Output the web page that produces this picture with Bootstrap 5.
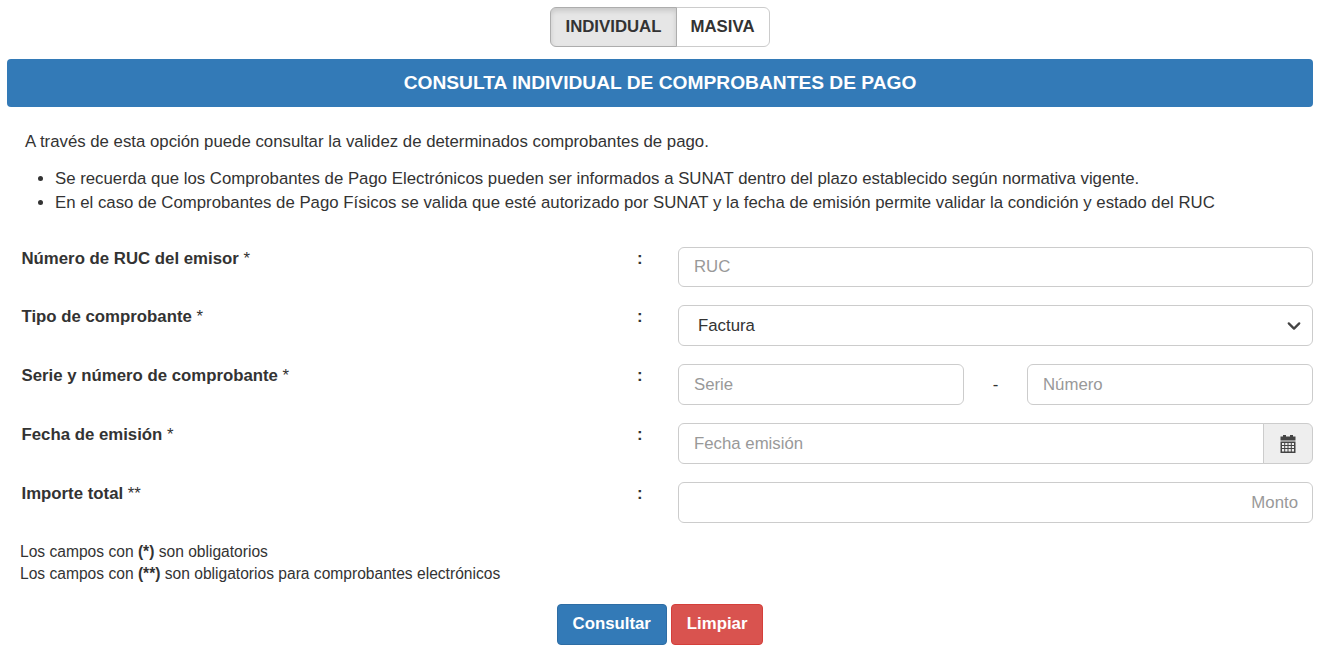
<!DOCTYPE html>
<html lang="es">
<head>
    <meta charset="UTF-8">
    <title>Consulta de comprobantes de pago</title>
    <link href="https://cdn.jsdelivr.net/npm/bootstrap@5.3.2/dist/css/bootstrap.min.css" rel="stylesheet">
    <style>
        body { font-family: "Liberation Sans", Arial, sans-serif; font-size: 16.8px; color: #333; background: #fff; }
        .page-wrap { padding: 7px 13px 0 7px; }
        .tab-btn { font-size: 16.8px; font-weight: 700; color: #333; background: #fff; border: 1px solid #ccc; height: 40px; padding: 0 14px; line-height: 38px; }
        .tab-btn.active { background: #e6e6e6; border-color: #adadad; box-shadow: inset 0 3px 5px rgba(0,0,0,.125); color: #333; }
        .tab-btn.active:hover, .tab-btn:hover { color: #333; }
        .title-bar { background: #337ab7; color: #fff; font-size: 19.2px; font-weight: 700; height: 48px; line-height: 47px; margin-top: 12px; border-radius: 4px; }
        .intro-text { margin: 24px 0 0 18px; line-height: 22px; }
        .note-list { margin: 14px 0 0; padding-left: 48px; line-height: 24px; }
        .form-area { margin-top: 32px; }
        .form-line { display: flex; height: 41px; margin-bottom: 18px; }
        .form-line:first-child { height: 40px; }
        .form-line:first-child .form-control { height: 40px; }
        .field-label { width: 630px; padding-left: 14.5px; font-weight: 700; line-height: 23px; }
        .field-label span { font-weight: 400; }
        .field-colon { width: 41px; font-weight: 700; line-height: 23px; }
        .field-box { flex: 1; min-width: 0; }
        .form-control, .form-select { height: 41px; font-size: 16.8px; color: #333; border-color: #ccc; padding-left: 15px; padding-right: 14px; border-radius: 6px; }
        .form-select { padding-left: 19px; background-size: 18px 14px; background-position: right 9px center; background-image: url("data:image/svg+xml,%3csvg xmlns='http://www.w3.org/2000/svg' viewBox='0 0 16 16'%3e%3cpath fill='none' stroke='%23444' stroke-linecap='round' stroke-linejoin='round' stroke-width='2.6' d='m2 5 6 6 6-6'/%3e%3c/svg%3e"); }
        .form-control::placeholder { color: #999; }
        .num-dash { width: 63px; text-align: center; line-height: 41px; }
        .date-addon { width: 50px; justify-content: center; background: #eee; border-color: #ccc; padding: 0; }
        .legend-text { margin: 18px 0 0 13px; line-height: 22px; font-size: 15.6px; }
        .act-btn { font-size: 16.8px; font-weight: 700; height: 41px; padding: 0 15px 2px; color: #fff; border-radius: 4px; }
        .act-blue { background: #337ab7; border: 1px solid #2e6da4; }
        .act-red { background: #d9534f; border: 1px solid #d43f3a; }
        .act-blue:hover { background: #337ab7; color: #fff; }
        .act-red:hover { background: #d9534f; color: #fff; }
        .action-row { margin-top: 19px; }
    </style>
</head>
<body>
    <div class="page-wrap">
        <div class="d-flex justify-content-center">
            <div class="btn-group">
                <button type="button" class="btn tab-btn active">INDIVIDUAL</button>
                <button type="button" class="btn tab-btn">MASIVA</button>
            </div>
        </div>

        <div class="title-bar text-center">CONSULTA INDIVIDUAL DE COMPROBANTES DE PAGO</div>

        <p class="intro-text">A través de esta opción puede consultar la validez de determinados comprobantes de pago.</p>
        <ul class="note-list">
            <li>Se recuerda que los Comprobantes de Pago Electrónicos pueden ser informados a SUNAT dentro del plazo establecido según normativa vigente.</li>
            <li>En el caso de Comprobantes de Pago Físicos se valida que esté autorizado por SUNAT y la fecha de emisión permite validar la condición y estado del RUC</li>
        </ul>

        <form class="form-area">
            <div class="form-line">
                <div class="field-label">Número de RUC del emisor <span>*</span></div>
                <div class="field-colon">:</div>
                <div class="field-box"><input type="text" class="form-control" placeholder="RUC"></div>
            </div>
            <div class="form-line">
                <div class="field-label">Tipo de comprobante <span>*</span></div>
                <div class="field-colon">:</div>
                <div class="field-box">
                    <select class="form-select">
                        <option>Factura</option>
                    </select>
                </div>
            </div>
            <div class="form-line">
                <div class="field-label">Serie y número de comprobante <span>*</span></div>
                <div class="field-colon">:</div>
                <div class="field-box d-flex">
                    <input type="text" class="form-control" placeholder="Serie">
                    <div class="num-dash flex-shrink-0">-</div>
                    <input type="text" class="form-control" placeholder="Número">
                </div>
            </div>
            <div class="form-line">
                <div class="field-label">Fecha de emisión <span>*</span></div>
                <div class="field-colon">:</div>
                <div class="field-box">
                    <div class="input-group">
                        <input type="text" class="form-control" placeholder="Fecha emisión">
                        <span class="input-group-text date-addon">
                            <svg width="16" height="18" viewBox="0 0 16 18" fill="#444">
                                <rect x="3" y="0" width="3" height="3"/>
                                <rect x="10" y="0" width="3" height="3"/>
                                <rect x="0.5" y="1.5" width="15" height="4"/>
                                <path fill-rule="evenodd" d="M.5 6.5h15V18H.5zM2 8v2h2.2V8zm3.2 0v2h2.3V8zm3.3 0v2h2.3V8zm3.3 0v2H14V8zM2 11v2h2.2v-2zm3.2 0v2h2.3v-2zm3.3 0v2h2.3v-2zm3.3 0v2H14v-2zM2 14v2.5h2.2V14zm3.2 0v2.5h2.3V14zm3.3 0v2.5h2.3V14zm3.3 0v2.5H14V14z"/>
                            </svg>
                        </span>
                    </div>
                </div>
            </div>
            <div class="form-line">
                <div class="field-label">Importe total <span>**</span></div>
                <div class="field-colon">:</div>
                <div class="field-box"><input type="text" class="form-control text-end" placeholder="Monto"></div>
            </div>
        </form>

        <div class="legend-text">
            Los campos con <b>(*)</b> son obligatorios<br>
            Los campos con <b>(**)</b> son obligatorios para comprobantes electrónicos
        </div>

        <div class="action-row d-flex justify-content-center gap-1">
            <button type="button" class="btn act-btn act-blue">Consultar</button>
            <button type="button" class="btn act-btn act-red">Limpiar</button>
        </div>
    </div>
</body>
</html>
